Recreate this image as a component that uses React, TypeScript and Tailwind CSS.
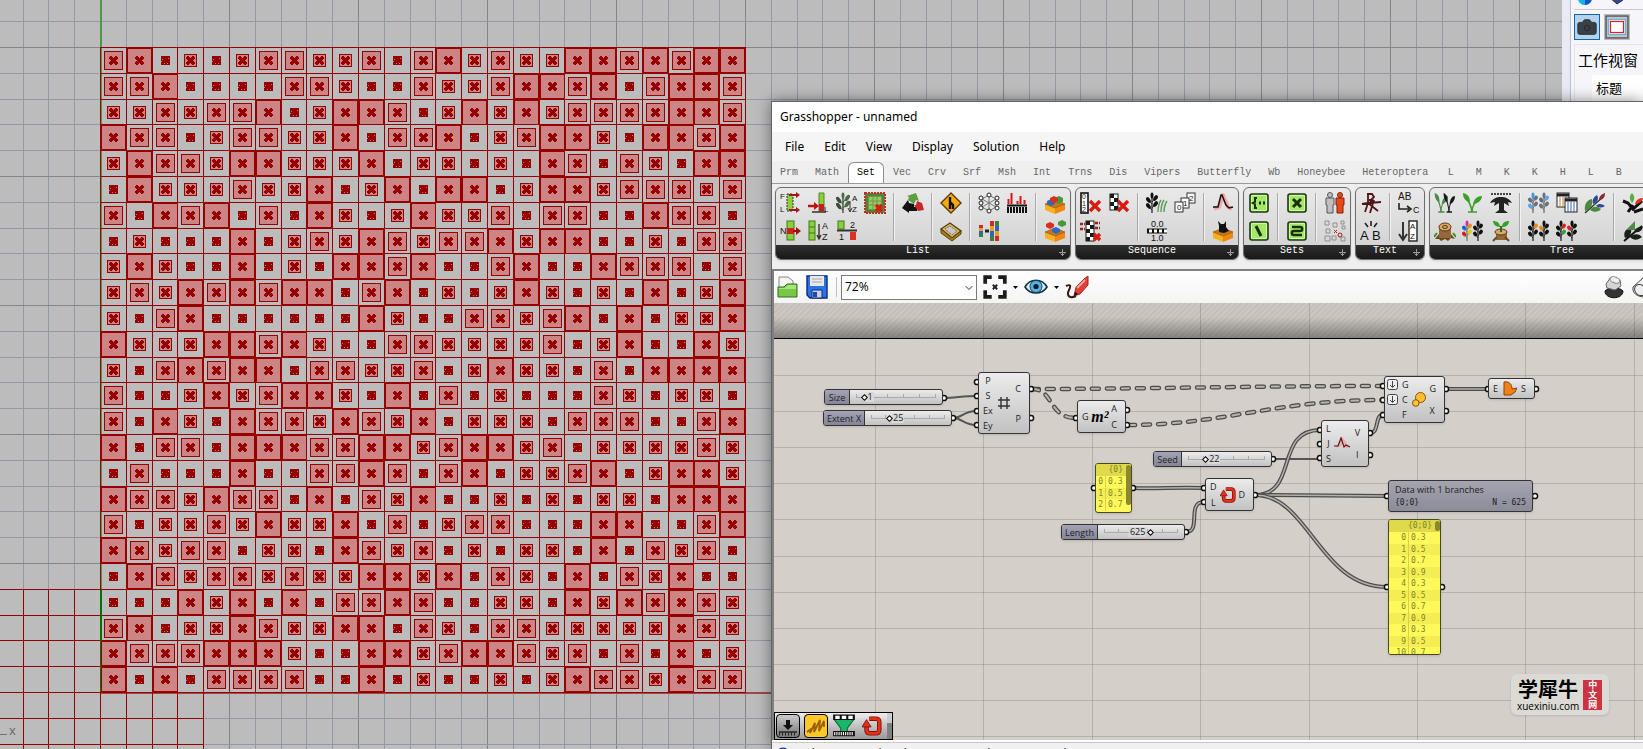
import React from 'react';
import { ChevronDown, Camera, CircleHelp } from 'lucide-react';

// one digit per cell of the 25 x 25 layout: 3, 5, 7 or 9 tenths of the cell
const CELLS = [
  '7935357755737957559979799',
  '7793333775337557997937997',
  '5575779359973595957777997',
  '9773577559377935799539979',
  '5977599555935535397375399',
  '3955575593593993599577757',
  '7397937395359557377339773',
  '3533393575975779599335377',
  '5953393539979337933977737',
  '5759797993793535953539359',
  '5379333333953377579393559',
  '9555997953377555573593395',
  '5379799377557359553739999',
  '7335957995393735333753553',
  '7395397759759355537773379',
  '9377399977995799573555575',
  '3733393377973793557935995',
  '9775977393759335353553999',
  '7355759559373577333993379',
  '9757735539757353553937573',
  '3975775755995937539375933',
  '3339593937797335539597975',
  '7935597559937537755555975',
  '9777999533995799757373935',
  '9393777733935335359775977',
];

const STEP = 25.8;
const gridX = (i: number) => Math.round(100 + i * STEP) + 0.5;
const gridY = (i: number) => Math.round(47 + i * STEP) + 0.5;
const range = (from: number, to: number) => Array.from({ length: to - from + 1 }, (_, i) => from + i);

const BOX: Record<string, number> = { '5': 12, '7': 18, '9': 24 };

const Cell: React.FC<{ col: number; row: number; size: string }> = ({ col, row, size }) => {
  const cx = Math.round(100 + (col + 0.5) * STEP) + 0.5;
  const cy = Math.round(47 + (row + 0.5) * STEP) + 0.5;
  const box = BOX[size];
  return (
    <g transform={`translate(${cx} ${cy})`}>
      {box ? (
        <>
          <rect x={-box / 2} y={-box / 2} width={box} height={box} fill="#cd8484" stroke="#960000" />
          <use href="#mark" />
        </>
      ) : (
        <use href="#dot" />
      )}
    </g>
  );
};

const Viewport: React.FC = () => (
  <main className="min-w-0 flex-1 bg-[#bcbcbc]">
    <svg className="block h-full w-full" shapeRendering="crispEdges">
      <defs>
        <path
          id="mark"
          stroke="#960000"
          d="M-3.5-4h2M1.5-4h2M-4.5-3h4M.5-3h4M-4.5-2h9M-3.5-1h7M-2.5 0h5M-3.5 1h7M-4.5 2h9M-4.5 3h4M.5 3h4M-3.5 4h2M1.5 4h2"
        />
        <g id="dot">
          <rect x="-4.5" y="-4.5" width="9" height="9" fill="#960000" />
          <path d="M-3.5-1h1M2.5-2h1M-1.5 3h1M1.5 3h1M-4.5 1h1" stroke="#ae8080" />
        </g>
      </defs>
      {range(-3, 60).map((i) => (
        <line key={`v${i}`} x1={gridX(i)} x2={gridX(i)} y1="0" y2="100%" stroke={i % 5 === 0 ? '#82858c' : '#9299a4'} />
      ))}
      {range(-1, 27).map((i) => (
        <line key={`h${i}`} y1={gridY(i)} y2={gridY(i)} x1="0" x2="100%" stroke={i % 5 === 0 ? '#82858c' : '#9299a4'} />
      ))}
      <line x1="101" x2="101" y1="0" y2="692" stroke="#4a9a4a" strokeWidth="2" />
      <line x1="101" x2="100%" y1="693" y2="693" stroke="#a04848" strokeWidth="2" />
      <g stroke="#960000">
        {range(-3, 4).map((i) => (
          <line key={i} x1={gridX(i)} x2={gridX(i)} y1={gridY(21)} y2="100%" />
        ))}
        {range(21, 27).map((i) => (
          <line key={i} y1={gridY(i)} y2={gridY(i)} x1="0" x2={gridX(4)} />
        ))}
        {range(0, 25).map((i) => (
          <path key={i} d={`M${gridX(i)} 47V693M100 ${gridY(i)}H746`} />
        ))}
      </g>
      <line x1="101" x2="101" y1="590" y2="692" stroke="#007000" strokeWidth="2" />
      {CELLS.map((line, row) => line.split('').map((size, col) => <Cell key={`${row}-${col}`} col={col} row={row} size={size} />))}
      <path d="M0 734.5H7" stroke="#707070" />
      <text x="9" y="735" fontSize="13" fill="#666" fontFamily="Open Sans, sans-serif">x</text>
    </svg>
  </main>
);

const SidePanel: React.FC = () => (
  <aside className="w-[81px] shrink-0 overflow-hidden bg-[#e9e9f2] pl-2">
    <div className="h-full border-l border-[#b9c1d8] bg-[#f6f6fa] pl-[3px]">
      <div className="flex h-[10px] items-end gap-4 overflow-hidden border-b border-[#c9c9d4] pl-1">
        <svg width="14" height="14" viewBox="0 0 14 14" className="mb-1 shrink-0">
          <circle cx="7" cy="7" r="7" fill="#1ad08a" />
          <path d="M0 7a7 7 0 0 0 7 7V7z" fill="#16b4e8" />
          <path d="M7 14a7 7 0 0 0 7-7H7z" fill="#1c50c8" />
        </svg>
        <svg width="16" height="12" viewBox="0 0 16 12" className="mb-1 shrink-0">
          <path d="M1 4l8 7 6-4V2L9 6z" fill="#384890" stroke="#202848" />
        </svg>
      </div>
      <div className="flex gap-1 pt-1">
        <button aria-label="Viewport" className="flex size-[26px] items-center justify-center border border-[#1464a5] bg-[#b5d3ee]">
          <Camera size={22} fill="#3a4046" stroke="#22282e" strokeWidth={1} />
        </button>
        <button aria-label="Rectangle" className="flex size-[26px] items-center justify-center border border-[#bbb] bg-[#eee]">
          <svg width="24" height="24" viewBox="0 0 24 24">
            <rect x="1" y="1" width="22" height="22" fill="#c4c4c4" stroke="#555" strokeWidth="1.5" />
            <rect x="3.5" y="4.5" width="17" height="15" fill="#fff" stroke="#68b4e4" strokeWidth="1.5" />
            <rect x="5.5" y="6.5" width="13" height="11" fill="#fff" stroke="#e02020" strokeWidth="1.2" />
          </svg>
        </button>
      </div>
      <section className="mt-1 border-t border-l border-[#e4e4ec] font-['Noto_Sans_CJK_SC',sans-serif] whitespace-nowrap text-black">
        <h2 className="pl-[3px] text-[15px] leading-[30px]">工作视窗</h2>
        <div className="ml-[17px] bg-white pl-1 text-[13px] leading-[26px]">标题</div>
      </section>
    </div>
  </aside>
);

/* ---------- icons ---------- */

const Ico: React.FC<{ children: React.ReactNode; size?: number }> = ({ children, size = 22 }) => (
  <svg width={size} height={size} viewBox="0 0 22 22" fill="none" className="shrink-0">
    {children}
  </svg>
);

const GREEN = '#8ccf3c';
const DARK = '#1a1a1a';

// branch with a stem and alternating leaves
const Plant: React.FC<{ x: number; w?: number; colors: string[]; stem?: string }> = ({ x, w = 4, colors, stem = DARK }) => (
  <g transform={`translate(${x} 0)`}>
    <path d="M0 21V3" stroke={stem} strokeWidth="1.2" />
    <ellipse cx="0" cy="3.5" rx="1.5" ry="3" fill={colors[0]} />
    {[7, 13].map((y, i) => (
      <g key={y} stroke={stem} strokeWidth=".8">
        <path d={`M0 ${y + 5}L${-w} ${y}M0 ${y + 3}L${w} ${y - 2}`} />
        <ellipse stroke="none" cx={-w / 1.4} cy={y + 1} rx={w / 1.6} ry="1.9" fill={colors[(i * 2 + 1) % colors.length]} transform={`rotate(55 ${-w / 1.4} ${y + 1})`} />
        <ellipse stroke="none" cx={w / 1.4} cy={y - 1} rx={w / 1.6} ry="1.9" fill={colors[(i * 2 + 2) % colors.length]} transform={`rotate(-55 ${w / 1.4} ${y - 1})`} />
      </g>
    ))}
  </g>
);

const Sprout: React.FC<{ x: number; c: string; s?: number }> = ({ x, c, s = 1 }) => (
  <g transform={`translate(${x} 1) scale(${s} 1)`} fill={c}>
    <path d="M0 19C-1 12-3 8-6 6" stroke={c} strokeWidth="1.6" fill="none" />
    <path d="M0 19C0 12 3 9 7 6M-4 19H5" stroke={c} strokeWidth="1.6" fill="none" />
    <path d="M-2 9C-7 8-9 5-9 0c5 1 7 4 7 9zM1 11C2 6 5 3 10 3c0 4-4 8-9 8z" />
  </g>
);

const Cross: React.FC<{ x: number; y: number; r?: number }> = ({ x, y, r = 4 }) => (
  <path d={`M${x - r} ${y - r}l${2 * r} ${2 * r}M${x + r} ${y - r}l${-2 * r} ${2 * r}`} stroke="#d81a10" strokeWidth="3.4" />
);

const Checks: React.FC<{ x: number; y: number; rows: number }> = ({ x, y, rows }) => (
  <g>
    <rect x={x} y={y} width="8" height={rows * 4} fill="#fff" stroke={DARK} />
    {range(0, rows - 1).map((i) => (
      <rect key={i} x={x + (i % 2) * 4} y={y + i * 4} width="4" height="4" fill={DARK} />
    ))}
  </g>
);

const Txt: React.FC<{ x: number; y: number; s?: number; c?: string; children: string }> = ({ x, y, s = 9, c = '#111', children }) => (
  <text x={x} y={y} fontSize={s} fill={c} fontFamily="Liberation Sans, sans-serif">{children}</text>
);

const Crate: React.FC = () => (
  <>
    <path d="M1 12l10 4v6L1 18z" fill="#f8b020" />
    <path d="M11 16l10-4v6l-10 4z" fill="#f08810" />
    <path d="M1 12l10-4 10 4-10 4z" fill="#c87818" stroke="#8a4a08" strokeWidth=".6" />
  </>
);

const SetBox: React.FC<{ children: React.ReactNode }> = ({ children }) => (
  <>
    <rect x="2" y="2" width="18" height="18" rx="2" fill="#a4e868" stroke="#1c3810" strokeWidth="1.6" />
    <rect x="3.5" y="3.5" width="15" height="15" rx="1" stroke="#d4f8b0" />
    <g stroke="#183008" strokeWidth="3">{children}</g>
  </>
);

const blackPlants = (...accent: string[]) => (
  <>
    <Plant x={5} w={4} colors={['#111', '#111', accent[0], '#111', accent[1] ?? '#111']} />
    <Plant x={16} w={4} colors={['#111', accent[0], '#111', '#111', '#111']} />
  </>
);

const icons: Record<string, React.ReactNode> = {
  listItem: (
    <>
      <Txt x={0} y={7} s={8}>F</Txt><Txt x={0} y={20} s={8}>L</Txt>
      <rect x="7" y="2" width="6" height="17" fill={GREEN} stroke="#333" strokeDasharray="2 1" />
      <path d="M9 3h8M9 18h8" stroke="#a01818" strokeWidth="2" /><path d="M16 0l4 3-4 3zM16 15l4 3-4 3z" fill="#a01818" />
    </>
  ),
  insert: (
    <>
      <path d="M11 1h5v18h-5z" fill={GREEN} stroke="#4a8a20" /><rect x="11" y="12" width="5" height="7" fill="#c02020" />
      <path d="M0 14h7" stroke="#c01010" strokeWidth="2.4" /><path d="M6 10l5 4-5 4z" fill="#c01010" />
      <path d="M4 20h14" stroke="#333" strokeWidth="1.5" /><Txt x={16} y={20} s={8}>L</Txt>
    </>
  ),
  sortTree: (
    <>
      <Plant x={7} w={6} colors={['#4a6a48', '#38503a']} stem="#333" />
      <path d="M14 9v10M12 16l2 4 2-4" stroke="#333" /><Txt x={16} y={9} s={8}>A</Txt><Txt x={16} y={20} s={8}>Z</Txt>
    </>
  ),
  cull: (
    <>
      <rect x="1" y="1" width="20" height="20" fill="#6a9a40" stroke="#b83028" strokeWidth="2" strokeDasharray="2 1" />
      <rect x="3" y="3" width="16" height="16" stroke="#4a7a38" strokeWidth="1.5" />
      <path d="M5 5h12v12H5z" fill="#98c860" /><path d="M9 4v14M13 4v14M4 9h14M4 13h14" stroke="#6a9a48" /><Cross x={15} y={16} r={3} />
    </>
  ),
  shift: (
    <>
      <Txt x={0} y={14} s={9}>N</Txt><rect x="7" y="1" width="7" height="19" fill={GREEN} stroke="#3a7a18" />
      <rect x="7" y="8" width="7" height="6" fill="#d02020" /><path d="M13 11h4" stroke="#a01010" strokeWidth="2" /><path d="M16 7l5 4-5 4z" fill="#a01010" />
    </>
  ),
  sortList: (
    <>
      <rect x="1" y="1" width="6" height="19" fill={GREEN} stroke="#3a7a18" /><path d="M1 7h6M1 13h6" stroke="#3a7a18" />
      <path d="M11 4v15M9 15l2 4 2-4" stroke="#333" strokeWidth="1.4" /><Txt x={14} y={9}>A</Txt><Txt x={14} y={20}>Z</Txt>
    </>
  ),
  split: (
    <>
      <rect x="2" y="1" width="6" height="8" fill={GREEN} stroke="#3a7a18" /><rect x="14" y="12" width="6" height="8" fill="#e03020" />
      <path d="M1 10.5h20" stroke="#333" strokeWidth="2" /><Txt x={14} y={8}>2</Txt><Txt x={3} y={20}>1</Txt>
    </>
  ),
  recycle: (
    <>
      <path d="M6 8l1-3-2-1 9-3 3 8-3-1-2 4z" fill="#58a040" /><path d="M0 16l6-8 1 3 5 1v3h3v4H7v2z" fill="#111" /><path d="M15 9l5 2 2 7-6 1-4-6h2z" fill="#c82828" />
    </>
  ),
  sign: (
    <>
      <path d="M11 1l10 10-10 10L1 11z" fill="#f8a810" stroke="#5a3a08" strokeWidth="1.4" /><path d="M10 5v5l3 3v4M10 11v6" stroke="#111" strokeWidth="2.4" />
    </>
  ),
  sieve: (
    <>
      <path d="M1 9l9-6 11 8-9 7z" fill="#d8b860" stroke="#5a4008" strokeWidth="1.4" /><path d="M1 9v4l11 8 9-7v-3l-9 7z" fill="#a08020" stroke="#5a4008" />
      <path d="M5 9l5-3 7 5-5 4z" fill="#c8c8c8" stroke="#555" strokeDasharray="1 1" />
    </>
  ),
  web: (
    <>
      <path d="M11 3L4 7v8l7 4 7-4V7zM11 3v16M4 7l14 8M18 7L4 15" stroke="#777" />
      {[[11, 3], [3, 6], [3, 11], [3, 16], [19, 6], [19, 11], [19, 16], [11, 19]].map(([x, y]) => (
        <circle key={`${x}-${y}`} cx={x} cy={y} r="2" fill="#fff" stroke="#222" />
      ))}
    </>
  ),
  bars: (
    <>
      <path d="M2.5 12V7M5.5 12V1M11.5 12V9M14.5 12V4M18.5 12V8" stroke="#d01818" strokeWidth="2" />
      <path d="M1 13.5h20" stroke="#111" strokeWidth="2" /><path d="M1 18h20" stroke="#111" strokeWidth="6" strokeDasharray="2 1" />
    </>
  ),
  mosaic: (
    <>
      {['#d02828', '#e8a018', '#2868c0', '#38803c'].map((c, i) => (
        <g key={c} fill={c}>
          <rect x="1" y={5 + i * 3} width="4" height="3" /><rect x="12" y={1 + i * 5} width="4" height="5" /><rect x="17" y={16 - i * 5} width="4" height="5" />
        </g>
      ))}
      <path d="M7 11h4" stroke="#222" strokeWidth="3" />
    </>
  ),
  crate: (
    <>
      <Crate /><path d="M3 9l4-2 4 2v3l-4 2-4-2z" fill="#3068c0" /><path d="M11 6l4-2 4 2v4l-4 2-4-2z" fill="#489838" /><path d="M6 6l4-2 4 2v3l-4 2-4-2z" fill="#d83020" />
    </>
  ),
  crateOpen: (
    <>
      <Crate /><path d="M2 4l4-2 4 2v3l-4 2-4-2z" fill="#d83020" /><path d="M14 2l4-2 4 2v3l-4 2-4-2z" fill="#489838" /><path d="M8 9l4-2 4 2v3l-4 2-4-2z" fill="#3068c0" />
    </>
  ),
  cullIndex: (
    <>
      <rect x="1" y="1" width="7" height="20" fill="#fff" stroke="#111" strokeWidth="1.6" /><Txt x={2} y={7} s={7}>0</Txt><Txt x={2} y={14} s={7}>1</Txt><Txt x={2} y={20} s={7}>2</Txt>
      <Cross x={15} y={14} r={5} />
    </>
  ),
  cullNth: <><Checks x={2} y={2} rows={4} /><Cross x={15} y={14} r={5} /></>,
  cullPattern: <><Checks x={6} y={1} rows={5} /><path d="M0 4h5M0 9h5M15 3h5M15 8h5" stroke="#a02020" strokeWidth="2.4" strokeDasharray="3 1" /><Cross x={17} y={17} r={3} /></>,
  grass: (
    <>
      <Plant x={6} w={5} colors={['#111']} /><path d="M12 20c0-5 1-9 3-12M15 20c0-5 1-9 3-12M18 20c0-4 1-8 3-11" stroke="#5a9a58" strokeWidth="1.4" />
    </>
  ),
  series: (
    <>
      {[[13, 0, '2'], [7, 5, '1'], [1, 9, '0']].map(([x, y, t]) => (
        <g key={t as string}><rect x={x as number} y={(y as number) + 1} width="8" height="10" fill="#fff" stroke="#333" /><Txt x={(x as number) + 2} y={(y as number) + 9} s={8}>{t as string}</Txt></g>
      ))}
    </>
  ),
  rangeIcon: (
    <>
      <Txt x={5} y={7} s={9}>0.0</Txt><path d="M1 11h20" stroke="#111" strokeWidth="5" /><path d="M3 11h18" stroke="#fff" strokeWidth="3" strokeDasharray="3 2" /><Txt x={5} y={21} s={9}>1.0</Txt>
    </>
  ),
  jitter: (
    <>
      <path d="M2 17l5-2 4-12 5 12 4 2" stroke="#f4a8a8" strokeWidth="4" strokeLinejoin="round" /><path d="M1 15h5l3-12h1l4 10 3 3 4-1" stroke="#181010" strokeWidth="1.5" />
    </>
  ),
  catBox: <><Crate /><path d="M7 12V6L6 1l3 3h3l2-3v6l3 4-5 2z" fill="#111" /></>,
  setMake: <SetBox><path d="M9 6H7v4l-2 1 2 1v4h2" strokeWidth="2" /><path d="M11 11h2M15 11h2" /></SetBox>,
  setX: <SetBox><path d="M7 7l8 8M15 7l-8 8" /></SetBox>,
  setDiff: <SetBox><path d="M8 6l5 10" /></SetBox>,
  setUnion: <SetBox><path d="M6 7h8c3 0 3 4 0 4H8c-3 0-3 4 0 4h8" strokeWidth="2.4" /></SetBox>,
  people: (
    <>
      <g fill="#c0c0c0" stroke="#555"><circle cx="6" cy="3" r="2.5" /><path d="M2 6h8v7H9v8H3v-8H2z" /></g>
      <g fill="#e84818" stroke="#802008"><circle cx="16" cy="3" r="2.5" /><path d="M12 6h8v7h-1v8h-6v-8h-1z" /></g>
    </>
  ),
  scatter: (
    <>
      <path d="M1 1h4v4H1zM9 3h4v4H9zM17 1h3v3h-3zM18 6h3v3h-3zM2 9h4v4H2zM1 16h5v5H1zM8 16h4v4H8zM17 17h4v4h-4z" stroke="#909090" /><path d="M10 10l3 3M13 10l-3 3" stroke="#c02020" /><circle cx="16" cy="15" r="2" stroke="#a02020" />
    </>
  ),
  chair: (
    <path d="M7 2h5l2 3-3 3H9M8 2v9l-6 1M14 8l-5 3 12-1M8 11l10 8M8 11l-3 9M14 8l-4 13" stroke="#501418" strokeWidth="1.8" />
  ),
  concat: <><Txt x={0} y={8} s={10}>AB</Txt><path d="M1 11v6h10M9 14l4 3-4 3" stroke="#222" strokeWidth="1.6" /><Txt x={15} y={21} s={9}>C</Txt></>,
  letters: <><Txt x={0} y={20} s={13}>A</Txt><Txt x={12} y={20} s={13}>B</Txt><path d="M8 7L5 3M11 6V1M14 7l3-4" stroke="#222" strokeWidth="1.6" /></>,
  sortText: <><path d="M5 2v16M1 14l4 6 4-6" stroke="#333" strokeWidth="2" /><rect x="11" y="1" width="8" height="20" fill="#fff" stroke="#222" strokeWidth="1.4" /><Txt x={12} y={9} s={8}>A</Txt><Txt x={12} y={19} s={8}>Z</Txt></>,
  sprouts: <><Sprout x={7} c="#4a8a48" s={0.7} /><Sprout x={15} c="#181818" s={0.6} /></>,
  sprout: <Sprout x={10} c="#3aa028" />,
  tree: (
    <>
      <path d="M1 2h20" stroke="#111" strokeWidth="1.6" strokeDasharray="2 1" /><path d="M0 11c3-5 7-6 11-6s8 1 11 6l-4-1 1 4-5-3v7l4 3H5l4-3v-7l-5 3 1-4z" fill="#222" />
    </>
  ),
  stump: (
    <>
      <path d="M1 19l4-5 12 0 4 5-4-1-3 3-3-2-4 2-2-2z" fill="#6a4818" /><path d="M5 8v10h12V8z" fill="#94683a" /><ellipse cx="11" cy="7" rx="6" ry="4" fill="#d8a868" stroke="#5a3810" /><ellipse cx="11" cy="7" rx="2.5" ry="1.5" stroke="#5a3810" /><path d="M0 17l3-4M22 17l-3-4" stroke="#389028" strokeWidth="2" />
    </>
  ),
  colorPlants: <><Plant x={5} colors={['#d030a0', '#2060d0', '#e89018', '#d02020', '#e8c818']} stem="#585" /><Plant x={16} colors={['#111']} /></>,
  graft: (
    <>
      <path d="M6 12v8h11v-8z" fill="#94683a" /><ellipse cx="11" cy="12" rx="6" ry="3" fill="#d8a868" stroke="#5a3810" /><path d="M11 12V6" stroke="#2a7020" strokeWidth="2" /><path d="M10 7C6 7 3 4 3 1c4 0 7 2 7 6zM12 7c0-4 3-6 7-6 0 4-3 6-7 6z" fill="#38a028" /><path d="M3 21l4-4M19 21l-4-4" stroke="#6a4818" strokeWidth="2" />
    </>
  ),
  bluePlants: <><Plant x={5} colors={['#3a98e8', '#6a7078', '#6a7078', '#50a8f0', '#6a7078']} stem="#666" /><Plant x={16} colors={['#6a7078', '#606870', '#50a8f0', '#6a7078']} stem="#666" /></>,
  tables: (
    <>
      <rect x="1" y="1" width="12" height="14" fill="#fff" stroke="#222" /><path d="M1 3h12" stroke="#222" strokeWidth="3" /><path d="M4 5v10M7 5v10M10 5v10" stroke="#c08030" /><rect x="9" y="6" width="12" height="14" fill="#fff" stroke="#222" /><path d="M9 8h12" stroke="#222" strokeWidth="3" /><path d="M12 10v10M15 10v10M18 10v10" stroke="#3060b0" />
    </>
  ),
  branch: (
    <>
      <path d="M1 21L20 4" stroke="#333" strokeWidth="1.4" /><path d="M1 19C0 12 3 8 8 7c1 6-1 10-7 12zM6 18c4 3 9 2 11-1-4-3-8-3-11 1z" fill="#4a8a40" /><path d="M9 12c-1-5 1-7 4-9 2 4 1 7-4 9zM12 14c3-3 6-2 9 0-3 2-6 2-9 0z" fill="#304890" /><path d="M15 8c0-4 3-6 6-7 0 4-2 7-6 7z" fill="#902830" />
    </>
  ),
  orangePlants: blackPlants('#e88818'),
  redPlants: blackPlants('#e02020', '#38a030'),
  mixed: <><path d="M1 9l5 2 5 6 9-8M6 20l5-7M12 20l9-3" stroke="#111" strokeWidth="3" /><path d="M10 11c-3-4-3-7 0-10 3 3 3 7 0 10z" fill="#58b040" /><path d="M13 12c1-4 4-6 8-6-1 4-4 6-8 6z" fill="#e03020" /></>,
  dark: <><path d="M2 21L20 6" stroke="#111" strokeWidth="2" /><path d="M3 18c-2-5 0-9 6-10 1 5-1 9-6 10zM8 17c4 4 8 3 12 0-4-4-9-3-12 0zM12 12c1-4 4-5 9-5-1 4-4 6-9 5z" fill="#182018" /><path d="M4 10l9-9v9z" fill="#508848" /></>,
  swirl: (
    <>
      <path d="M8 3h7c3 0 4 1 4 4v8c0 3-1 4-4 4H9c-3 0-4-1-4-4v-3" stroke="#801008" strokeWidth="5" />
      <path d="M8 3h7c3 0 4 1 4 4v8c0 3-1 4-4 4H9c-3 0-4-1-4-4v-3" stroke="#e83018" strokeWidth="3" />
      <path d="M0 12l5-8 5 8z" fill="#e83018" stroke="#801008" />
    </>
  ),
};

/* ---------- ribbon ---------- */

const TABS = ['Prm', 'Math', 'Set', 'Vec', 'Crv', 'Srf', 'Msh', 'Int', 'Trns', 'Dis', 'Vipers', 'Butterfly', 'Wb', 'Honeybee', 'Heteroptera', 'L', 'M', 'K', 'K', 'H', 'L', 'B'];

// each group is a list of columns, each column is [top, bottom]
const PANELS: { name: string; groups: string[][][] }[] = [
  {
    name: 'List',
    groups: [
      [['listItem', 'shift'], ['insert', 'sortList'], ['sortTree', 'split'], ['cull']],
      [['recycle']],
      [['sign', 'sieve']],
      [['web', 'mosaic'], ['bars']],
      [['crate', 'crateOpen']],
    ],
  },
  { name: 'Sequence', groups: [[['cullIndex', 'cullPattern'], ['cullNth']], [['grass', 'rangeIcon'], ['series']], [['jitter', 'catBox']]] },
  { name: 'Sets', groups: [[['setMake', 'setDiff']], [['setX', 'setUnion']], [['people', 'scatter']]] },
  { name: 'Text', groups: [[['chair', 'letters']], [['concat', 'sortText']]] },
  {
    name: 'Tree',
    groups: [
      [['sprouts', 'stump'], ['sprout', 'colorPlants'], ['tree', 'graft']],
      [['bluePlants', 'orangePlants'], ['tables', 'redPlants'], ['branch']],
      [['mixed', 'dark'], ['sprout'], ['sprouts']],
    ],
  },
];

const Ribbon: React.FC = () => (
  <div className="flex gap-1 overflow-hidden border-t border-[#9a9a9a] bg-[#efefef] pt-[3px] pb-[9px] pl-[3px]">
    {PANELS.map((panel) => (
      <section key={panel.name} className="shrink-0 overflow-hidden rounded-md border border-[#6e6e6e] bg-linear-to-b from-[#e9e9e9] to-[#cfcfcf] shadow-sm">
        <div className="flex px-px pt-px">
          {panel.groups.map((group, gi) => (
            <React.Fragment key={gi}>
              {gi > 0 && <div className="mx-1 my-1 w-[2px] border-l border-[#a8a8a8] bg-[#f2f2f2]" />}
              {group.map((column, ci) => (
                <div key={ci} className="flex w-7 flex-col">
                  {column.map((name) => (
                    <button key={name} aria-label={name} className="flex h-7 items-center justify-center">
                      <Ico>{icons[name]}</Ico>
                    </button>
                  ))}
                </div>
              ))}
            </React.Fragment>
          ))}
        </div>
        <div className="relative h-[14px] bg-linear-to-b from-[#303030] to-[#181818] pr-[10px] text-center font-['Liberation_Mono',monospace] text-[10px] leading-[12px] text-white">
          {panel.name}
          <svg className="absolute right-1 bottom-[3px]" width="7" height="7" viewBox="0 0 7 7">
            <path d="M3.5 0v7M0 3.5h7M1.5 4.5l2 2 2-2" stroke="#999" fill="none" />
          </svg>
        </div>
      </section>
    ))}
  </div>
);

const Tabs: React.FC = () => (
  <nav className="flex h-[22px] shrink-0 items-end gap-px overflow-hidden bg-[#efefef] font-['Liberation_Mono',monospace] text-[10px] text-[#666]">
    {TABS.map((tab, i) =>
      tab === 'Set' ? (
        <button key={i} className="h-[21px] rounded-t-md border border-b-0 border-[#8c8c8c] bg-white px-2 pb-[2px] text-black">{tab}</button>
      ) : (
        <button key={i} className="h-[21px] min-w-[27px] shrink-0 px-2">{tab}</button>
      ),
    )}
  </nav>
);

const Toolbar: React.FC = () => (
  <div className="flex h-8 shrink-0 items-center overflow-hidden bg-linear-to-b from-white to-[#f4f4f4] pl-[3px]">
    <button aria-label="Open" className="mr-2">
      <svg width="21" height="24" viewBox="0 0 21 24">
        <path d="M2 14V2h9l5 4v8z" fill="#f4f4f4" stroke="#888" />
        <path d="M1 12h6l3-3h10v13H1z" fill="#78c848" stroke="#2c7018" />
        <path d="M2 13h6l3-3h8v4H2z" fill="#a8e480" />
      </svg>
    </button>
    <button aria-label="Save" className="mr-2">
      <svg width="22" height="24" viewBox="0 0 22 24">
        <path d="M1 1h20v22H4l-3-3z" fill="#2a74e8" stroke="#0c2880" strokeWidth="1.4" />
        <path d="M4 1h14v10H4z" fill="#e8e8e8" />
        <path d="M6 4h10M6 7h10" stroke="#aaa" />
        <path d="M6 15h10v8H6z" fill="#c8d0e0" stroke="#0c2880" />
        <path d="M7 17h4v5H7z" fill="#1848a8" />
      </svg>
    </button>
    <div className="mr-1 h-5 w-px bg-[#c0c0c0]" />
    <div className="relative">
      <select aria-label="Zoom" defaultValue="72%" className="block h-[25px] w-[136px] appearance-none border border-[#7a7a7a] bg-white pl-[3px] text-[12px] leading-[20px] text-black">
        <option>72%</option>
        <option>100%</option>
      </select>
      <ChevronDown size={12} className="pointer-events-none absolute top-[7px] right-[2px] text-[#333]" />
    </div>
    <button aria-label="Zoom extents" className="ml-[6px]">
      <Ico size={24}>
        <path d="M2 8V2h6M14 2h6v6M20 14v6h-6M8 20H2v-6" stroke="#1c1c1c" strokeWidth="3.4" />
        <path d="M9 9l4 4M13 9l-4 4" stroke="#222" strokeWidth="1.8" />
      </Ico>
    </button>
    <svg width="5" height="3" className="mx-[6px]"><path d="M0 0h5L2.5 3z" /></svg>
    <button aria-label="Preview">
      <svg width="24" height="18" viewBox="0 0 24 18">
        <path d="M1 9c5-9 17-9 22 0-5 8-17 8-22 0z" fill="#d8eef8" stroke="#16303c" strokeWidth="1.6" />
        <circle cx="12" cy="8.5" r="6" fill="#58b0e0" stroke="#104060" />
        <circle cx="12" cy="8.5" r="2.6" fill="#0a1a28" />
      </svg>
    </button>
    <svg width="5" height="3" className="mx-[6px]"><path d="M0 0h5L2.5 3z" /></svg>
    <button aria-label="Sketch">
      <svg width="24" height="24" viewBox="0 0 24 24">
        <path d="M1 11c5-2 5 0 3 4-3 6 1 9 7 6" stroke="#3a1810" strokeWidth="2" fill="none" />
        <path d="M9 21l2-9 8-8 4-3v9l-8 9z" fill="#e04038" stroke="#a02820" />
        <path d="M12 13l8-8" stroke="#f8a8a0" strokeWidth="2" />
        <path d="M9 21l1-4 3 2z" fill="#111" />
      </svg>
    </button>
    <div className="-mr-[12px] ml-auto flex gap-[6px]">
      <button aria-label="Shaded">
        <svg width="22" height="24" viewBox="0 0 22 24">
          <path d="M2 16c0 9 18 9 18 0-3-4-15-4-18 0z" fill="#333" stroke="#111" />
          <path d="M3 9l5-7 9 3 1 6-6 4-8-2z" fill="#d4d4d4" stroke="#666" />
          <ellipse cx="12" cy="5" rx="5" ry="3" fill="#eee" stroke="#888" transform="rotate(20 12 5)" />
        </svg>
      </button>
      <button aria-label="Wireframe">
        <svg width="24" height="24" viewBox="0 0 24 24" fill="#eee" stroke="#444">
          <path d="M2 12L13 2l9 8-8 12C6 22 1 18 2 12z" />
          <ellipse cx="9" cy="15" rx="5" ry="6" transform="rotate(-40 9 15)" />
        </svg>
      </button>
    </div>
  </div>
);

/* ---------- canvas (origin at its own top left corner) ---------- */

const WIRES = ['M170 95C180 95 190 93 202 93', 'M179 115C188 115 190 108 202 108', 'M179 115C188 115 190 122 202 122', 'M499 156H546'];
const DOUBLE_WIRES = [
  'M359 185C385 186 400 184 430 185',
  'M412 229C428 229 412 199 430 199',
  'M481 192C525 192 500 127 546 127',
  'M481 192C520 192 560 193 613 193',
  'M481 192C535 192 545 284 613 284',
  'M596 130C606 130 600 112 609 112',
  'M672 86H714',
];
const DASHED_WIRES = ['M258 86C360 86 480 83 608 83', 'M258 86C280 86 274 115 302 115', 'M354 122C450 122 500 97 608 97'];

const PORTS = [
  [170, 95], [179, 115], [203, 79], [203, 93], [203, 108], [203, 122], [257, 86], [257, 115],
  [302, 115], [353, 107], [353, 122], [320, 185], [359, 185], [499, 156], [412, 229],
  [430, 185], [430, 199], [481, 192], [546, 127], [546, 141], [546, 155], [596, 130], [596, 152],
  [609, 83], [609, 97], [609, 112], [672, 86], [672, 108], [714, 86], [762, 86],
  [613, 193], [761, 193], [613, 284], [668, 284],
];

const NODE = 'absolute rounded-[3px] border border-[#333] bg-linear-to-b from-[#ececec] to-[#c2c2c2] shadow';

type SliderProps = { label: string; value: string; at: number; before?: boolean; box: string; labelBox: string };

const Slider: React.FC<SliderProps> = ({ label, value, at, before, box, labelBox }) => (
  <label className={`${NODE} flex h-4 overflow-hidden ${box}`}>
    <span className={`flex shrink-0 items-center justify-center border-r border-[#333] bg-linear-to-b from-[#a5a4b4] to-[#858498] leading-[13px] ${labelBox}`}>{label}</span>
    <span className="relative mx-[6px] flex min-w-0 flex-1 items-center">
      <svg className="absolute inset-0 h-full w-full" shapeRendering="crispEdges">
        <path d="M0 7.5H120" stroke="#aaa" />
        {range(0, 5).map((i) => (
          <line key={i} x1={`${i * 19.8}%`} x2={`${i * 19.8}%`} y1="4" y2="8" stroke="#aaa" />
        ))}
      </svg>
      <span className={`absolute bg-[#d9d9d9] px-px leading-[10px] ${before ? '-ml-[5px] -translate-x-full' : 'ml-1'}`} style={{ left: `${at}%` }}>{value}</span>
      <input
        type="range"
        aria-label={label}
        defaultValue={at}
        className="relative h-3 w-full appearance-none bg-transparent [&::-webkit-slider-thumb]:size-[5px] [&::-webkit-slider-thumb]:rotate-45 [&::-webkit-slider-thumb]:appearance-none [&::-webkit-slider-thumb]:border [&::-webkit-slider-thumb]:border-black [&::-webkit-slider-thumb]:bg-white"
      />
    </span>
  </label>
);

type CompProps = { box: string; inputs: string[]; outputs: string[]; children: React.ReactNode };

const Comp: React.FC<CompProps> = ({ box, inputs, outputs, children }) => (
  <div className={`${NODE} flex items-center justify-between px-1 ${box}`}>
    <div className="flex h-full flex-col justify-around text-center">{inputs.map((t, i) => <span key={i}>{t}</span>)}</div>
    {children}
    <div className="flex h-full flex-col justify-around pr-1 text-center">{outputs.map((t, i) => <span key={i}>{t}</span>)}</div>
  </div>
);

const DataPanel: React.FC<{ box: string; head: string; rows: string[]; numbers: string; thumb: string }> = ({ box, head, rows, numbers, thumb }) => (
  <div className={`absolute overflow-hidden rounded-[3px] border border-[#4a4a20] bg-[#fff95c] font-['DejaVu_Sans_Mono',monospace] text-[8px] text-[#7d8528] shadow ${box}`}>
    <div className="h-3 bg-[#e0d94c] pr-2 text-right leading-[11px]">{head}</div>
    {rows.map((row, i) => (
      <div key={i} className={`flex leading-[12px] ${i % 2 ? 'h-[11px] bg-[#f4ee54]' : 'h-3 bg-[#fff95c]'}`}>
        <span className={`shrink-0 border-r border-[#d8d048] pr-[2px] text-right ${numbers}`}>{i}</span>
        <span className="pl-[2px]">{row}</span>
      </div>
    ))}
    <div className={`absolute top-px right-0 w-[5px] rounded-sm bg-[#8c8830] ${thumb}`} />
  </div>
);

const Canvas: React.FC = () => (
  <div className="relative min-h-0 flex-1 overflow-hidden bg-[#d4cfc8] text-[9px] leading-none text-[#222]">
    <div className="h-9 border-b border-black bg-[repeating-linear-gradient(135deg,#ccc8c0_0_2px,#c4c0b8_2px_4px)]">
      <div className="h-full bg-linear-to-b from-transparent from-40% to-black/35" />
    </div>
    <svg className="absolute inset-0 h-full w-full" fill="none">
      <g stroke="#000" strokeOpacity=".14" shapeRendering="crispEdges">
        {range(0, 12).map((i) => {
          const x = Math.round(101 + i * 108.4) + 0.5;
          return <line key={i} x1={x} x2={x} y1="0" y2="100%" />;
        })}
        {range(0, 20).map((i) => {
          const y = Math.round(72 + i * 36.1) + 0.5;
          return <line key={i} x1="0" x2="100%" y1={y} y2={y} />;
        })}
      </g>
      <g stroke="#555" strokeWidth="2">
        {WIRES.map((d) => <path key={d} d={d} />)}
      </g>
      {DOUBLE_WIRES.map((d) => (
        <g key={d}>
          <path d={d} stroke="#4c4c4c" strokeWidth="4" />
          <path d={d} stroke="#b4b0aa" strokeWidth="1.5" />
        </g>
      ))}
      {DASHED_WIRES.map((d) => (
        <g key={d} strokeLinecap="round">
          <path d={d} stroke="#4c4c48" strokeWidth="4.5" strokeDasharray="7 8" />
          <path d={d} stroke="#b8b4ac" strokeWidth="2" strokeDasharray="7 8" />
        </g>
      ))}
      {PORTS.map(([x, y]) => <circle key={`${x}-${y}`} cx={x} cy={y} r="2.6" fill="#fff" stroke="#111" strokeWidth="1.5" />)}
    </svg>

    <Slider label="Size" value="1" at={8} box="left-[50px] top-[86px] w-[119px]" labelBox="w-[25px]" />
    <Slider label="Extent X" value="25" at={23} box="left-[49px] top-[107px] w-[129px]" labelBox="w-[41px]" />
    <Slider label="Seed" value="22" at={21} box="left-[379px] top-[148px] w-[119px]" labelBox="w-[28px]" />
    <Slider label="Length" value="625" at={64} before box="left-[287px] top-[221px] w-[124px]" labelBox="w-[36px]" />

    <Comp box="left-[204px] top-[69px] h-[62px] w-[52px]" inputs={['P', 'S', 'Ex', 'Ey']} outputs={['C', 'P']}>
      <svg width="14" height="14" viewBox="0 0 14 14"><path d="M4 1v12M10 1v12M1 4h12M1 10h12" stroke="#333" strokeWidth="1.4" /></svg>
    </Comp>
    <Comp box="left-[303px] top-[97px] h-[33px] w-[49px]" inputs={['G']} outputs={['A', 'C']}>
      <i className="font-['Liberation_Serif',serif] text-[16px] font-bold text-black">m²</i>
    </Comp>
    <Comp box="left-[431px] top-[175px] h-[33px] w-[49px]" inputs={['D', 'L']} outputs={['D']}>
      <Ico size={16}>{icons.swirl}</Ico>
    </Comp>
    <Comp box="left-[547px] top-[117px] h-[47px] w-[48px]" inputs={['L', 'J', 'S']} outputs={['V', 'I']}>
      <svg width="17" height="14" viewBox="0 0 17 14" fill="none">
        <path d="M2 10l4-2 2-6 3 4 3 5" stroke="#f4a8a8" strokeWidth="3" />
        <path d="M0 9h4l3-8 3 9 2-2 4 2" stroke="#501818" strokeWidth="1.2" />
      </svg>
    </Comp>
    <div className={`${NODE} left-[610px] top-[73px] flex h-[47px] w-[61px] items-center justify-between pr-2 pl-[2px]`}>
      <div className="flex h-full flex-col justify-around">
        {['G', 'C', 'F'].map((t) => (
          <span key={t} className="flex items-center gap-1">
            <svg width="11" height="11" viewBox="0 0 11 11" fill="none" stroke="#444" className={t === 'F' ? 'invisible' : ''}>
              <rect x=".5" y=".5" width="10" height="10" rx="2" fill="#eee" />
              <path d="M5.5 2v6M3 6l2.500 2.500L8 6" />
            </svg>
            {t}
          </span>
        ))}
      </div>
      <svg width="14" height="15" viewBox="0 0 14 15" stroke="#8a5008">
        <circle cx="8.5" cy="5.5" r="5" fill="#fcc030" />
        <circle cx="3.8" cy="11" r="3.3" fill="#fcc830" />
      </svg>
      <div className="flex h-full flex-col justify-around">
        <span>G</span>
        <span>X</span>
      </div>
    </div>
    <Comp box="left-[714px] top-[75px] h-[21px] w-[47px]" inputs={['E']} outputs={['S']}>
      <svg width="14" height="15" viewBox="0 0 14 15"><path d="M1 1c5-1 8 2 8 7l5-1-2 4-4 3H1z" fill="#f08018" stroke="#904008" /></svg>
    </Comp>

    <DataPanel box="left-[321px] top-[160px] h-[50px] w-[37px]" head="{0}" rows={['0.3', '0.5', '0.7']} numbers="w-[10px]" thumb="h-[40px]" />
    <DataPanel
      box="left-[614px] top-[216px] h-[136px] w-[53px]"
      head="{0;0}"
      rows={['0.3', '0.5', '0.7', '0.9', '0.3', '0.5', '0.7', '0.9', '0.3', '0.5', '0.7']}
      numbers="w-[20px]"
      thumb="h-[10px]"
    />
    <div className="absolute top-[177px] left-[614px] flex h-8 w-[145px] flex-col justify-between rounded-[3px] border border-[#333] bg-linear-to-b from-[#a5a4b0] to-[#8c8b9a] px-[6px] py-1 shadow">
      <span>Data with 1 branches</span>
      <span className="flex justify-between font-['DejaVu_Sans_Mono',monospace] text-[8px]">
        <span>{'{0;0}'}</span>
        <span>N = 625</span>
      </span>
    </div>

    <div className="absolute right-[34px] bottom-[25px] flex h-[41px] w-[98px] items-center gap-1 rounded-md bg-[#dcdad4] pl-[6px] shadow">
      <div className="text-center whitespace-nowrap text-black">
        <div className="font-['Noto_Sans_CJK_SC',serif] text-[20px] leading-[22px] font-bold">学犀牛</div>
        <div className="text-[10px] leading-[12px]">xuexiniu.com</div>
      </div>
      <div className="flex h-[30px] w-[19px] flex-col items-center justify-center bg-[#cc3344] font-['Noto_Sans_CJK_SC',sans-serif] text-[9px] leading-[10px] font-bold text-white">
        <span>中</span>
        <span>文</span>
        <span>网</span>
      </div>
    </div>

    <div className="absolute bottom-0 left-0 flex h-7 w-[119px] items-center gap-1 border border-black bg-linear-to-b from-[#eee] to-[#999] pl-px">
      <button aria-label="Dock" className="size-6 rounded-sm border border-black bg-linear-to-b from-[#ccc] to-[#777]">
        <Ico>
          <path d="M11 5v6" stroke="#111" strokeWidth="4" /><path d="M6 10h10l-5 5z" fill="#111" />
          <path d="M2 17h18" stroke="#222" strokeWidth="1.5" /><path d="M2 19h18" stroke="#222" strokeWidth="3" strokeDasharray="1 2" />
        </Ico>
      </button>
      <button aria-label="Scribble" className="size-6 rounded-sm border border-black bg-[#fcc828]">
        <Ico><path d="M2 17l4-3-1 4 5-10-1 9 6-12-1 11 5-10v6" stroke="#9a6008" strokeWidth="1.8" /></Ico>
      </button>
      <button aria-label="Funnel" className="size-6">
        <Ico size={24}>
          <path d="M2 5h18l-6 8v4H8v-4z" fill="#18b868" stroke="#0a6838" />
          <path d="M1 3h20M1 18h20" stroke="#111" strokeWidth="5" />
          <path d="M3 3h16" stroke="#fff" strokeWidth="3" strokeDasharray="4 2" /><path d="M2 18h18" stroke="#fff" strokeWidth="3" strokeDasharray="1 1" />
        </Ico>
      </button>
      <button aria-label="Repeat" className="flex size-6 items-center justify-center"><Ico size={20}>{icons.swirl}</Ico></button>
      <div className="ml-auto h-full w-[5px] bg-linear-to-b from-[#ccc] from-40% to-[#808080] to-40%" />
    </div>
  </div>
);

const Grasshopper: React.FC = () => (
  <div className="absolute top-[101px] right-0 bottom-0 left-[771px] flex flex-col overflow-hidden border-t border-l border-[#606468] bg-[#f0f0f0] shadow-[0_0_14px_rgba(0,0,0,0.45)]">
    <header className="h-[30px] shrink-0 bg-white pl-2 font-['Noto_Sans',sans-serif] text-[12px] leading-[29px] text-black">Grasshopper - unnamed</header>
    <nav className="flex h-[29px] shrink-0 items-center gap-5 bg-[#f5f5f5] pl-[13px] font-['Noto_Sans',sans-serif] text-[12px] text-black">
      {['File', 'Edit', 'View', 'Display', 'Solution', 'Help'].map((item) => (
        <button key={item}>{item}</button>
      ))}
    </nav>
    <Tabs />
    <Ribbon />
    <div className="flex min-h-0 flex-1 flex-col border-t-2 border-l-2 border-[#808080]">
      <Toolbar />
      <Canvas />
    </div>
    <footer className="h-[9px] shrink-0 overflow-hidden border-t-2 border-white">
      <div className="flex items-center gap-2 border-t border-[#c8c8c8] pt-[2px] pl-1 text-[12px] leading-[18px] text-black">
        <CircleHelp size={14} className="text-[#203890]" />
        Solution completed in ~1.8 seconds (147 seconds ago)
      </div>
    </footer>
  </div>
);

const App: React.FC = () => (
  <div className="relative flex h-screen overflow-hidden font-['Open_Sans','Noto_Sans_CJK_SC',sans-serif]">
    <Viewport />
    <SidePanel />
    <Grasshopper />
  </div>
);

export default App;
